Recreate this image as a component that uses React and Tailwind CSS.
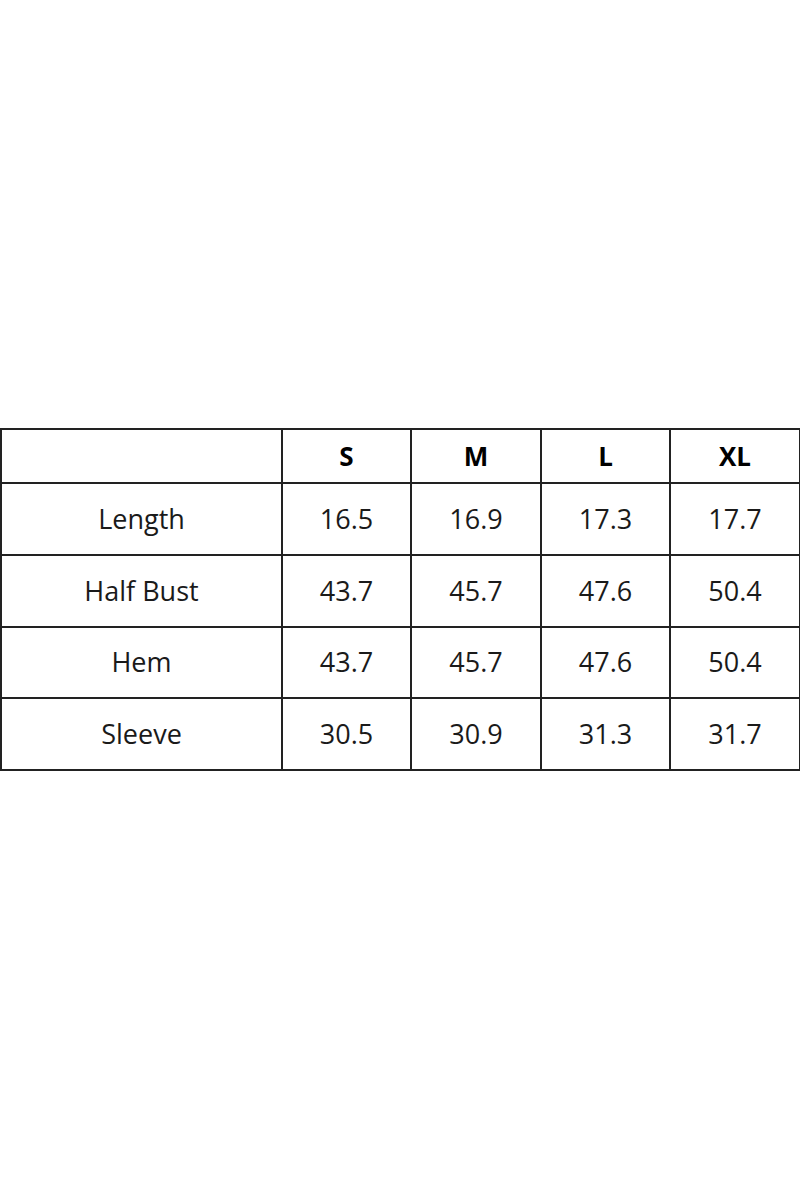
const SIZES = ['S', 'M', 'L', 'XL'];

const ROWS = [
  { label: 'Length', values: ['16.5', '16.9', '17.3', '17.7'], h: 'h-[72px]' },
  { label: 'Half Bust', values: ['43.7', '45.7', '47.6', '50.4'], h: 'h-[72px]' },
  { label: 'Hem', values: ['43.7', '45.7', '47.6', '50.4'], h: 'h-[71px]' },
  { label: 'Sleeve', values: ['30.5', '30.9', '31.3', '31.7'], h: 'h-[72px]' },
];

export default function App() {
  return (
    <div className="w-[800px] h-[1200px] bg-white pt-[428px]" style={{ fontFamily: '"Open Sans", "Noto Sans", sans-serif' }}>
      <table className="w-[799px] border-collapse table-fixed text-[#1a1a1a]">
        <colgroup>
          <col className="w-[281px]" />
          <col className="w-[129px]" />
          <col className="w-[130px]" />
          <col className="w-[129px]" />
          <col className="w-[130px]" />
        </colgroup>
        <thead>
          <tr className="h-[54px]">
            <th className="border-2 border-[#222]" />
            {SIZES.map(s => (
              <th key={s} className="border-2 border-[#222] text-[26px] font-bold text-black text-center">
                {s}
              </th>
            ))}
          </tr>
        </thead>
        <tbody>
          {ROWS.map(row => (
            <tr key={row.label} className={row.h}>
              <td className="border-2 border-[#222] text-[27px] text-center">{row.label}</td>
              {row.values.map((v, i) => (
                <td key={i} className="border-2 border-[#222] text-[27px] text-center">{v}</td>
              ))}
            </tr>
          ))}
        </tbody>
      </table>
    </div>
  );
}
